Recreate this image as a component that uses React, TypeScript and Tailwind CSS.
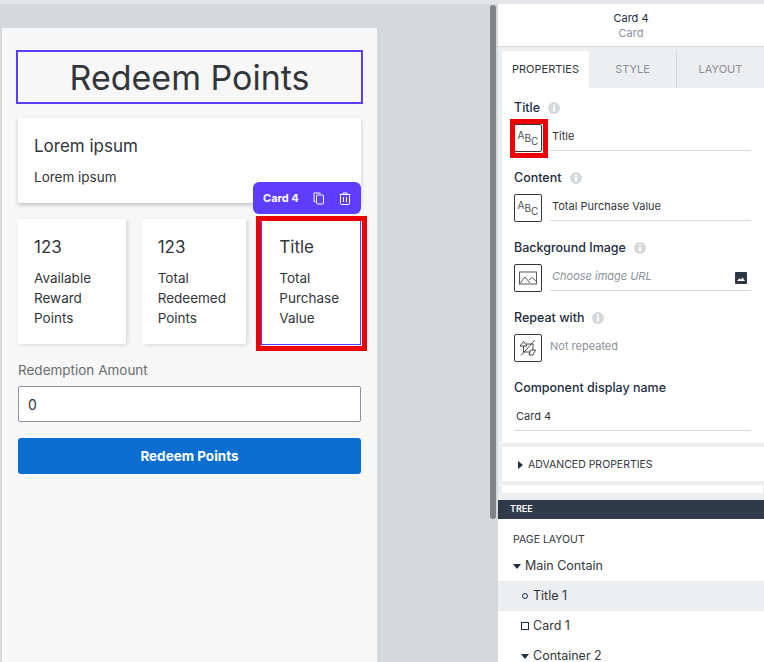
import React from "react";

const font = { fontFamily: 'Inter, sans-serif' };

function Info() {
  return (
    <svg width="12" height="12" viewBox="0 0 12 12" className="shrink-0">
      <circle cx="6" cy="6" r="6" fill="#d5d9dc" />
      <rect x="5" y="5" width="2" height="4.5" fill="#fff" />
      <rect x="5" y="2.5" width="2" height="1.6" fill="#fff" />
    </svg>
  );
}

function Abc() {
  return (
    <div className="w-7 h-7 rounded-[2px] border border-[#32363a] bg-white flex items-start justify-center pt-[5px] text-[#4a4f55] text-[10px] leading-none">
      <span>A</span>
      <span className="mt-[3px]">B</span>
      <span className="mt-[6px]">C</span>
    </div>
  );
}

function Label({ text }: { text: string }) {
  return (
    <div className="flex items-center gap-2 h-5 text-[12.5px] font-medium text-[#1d2d3e]">
      <span>{text}</span>
      <Info />
    </div>
  );
}

function StatCard({ title, lines, w }: { title: string; lines: string[]; w: string }) {
  return (
    <div className={`${w} h-[125px] bg-white shadow-[2px_1px_4px_rgba(0,0,0,0.12)] rounded-[1px] pl-4 pt-4`}>
      <div className="text-[17px] leading-6 text-[#32363a]">{title}</div>
      <div className="mt-[9px] text-[13.5px] leading-5 text-[#32363a]">
        {lines.map((l) => (
          <div key={l}>{l}</div>
        ))}
      </div>
    </div>
  );
}

export default function App() {
  return (
    <div style={font} className="relative w-[764px] h-[662px] overflow-hidden bg-[#d5d9dc] flex flex-col">
      <div className="h-1 shrink-0 bg-[#e4e5e9]" />
      <div className="flex flex-1 min-h-0">
        {/* Canvas side */}
        <div className="relative w-[498px] shrink-0 pt-6 pl-[2px]">
          <div className="relative w-[375px] h-[700px] bg-[#f7f7f7] px-[14px] pt-[22px]">
            <div className="h-[54px] w-[347px] border-2 border-[#5f3dff] flex items-center justify-center text-[34px] text-[#32363a]">
              Redeem Points
            </div>
            <div className="mx-[2px] w-[343px] mt-[14px] h-[85px] bg-white shadow-[0_2px_4px_rgba(0,0,0,0.22)] pl-4 pt-4">
              <div className="text-[17px] leading-6 text-[#32363a]">Lorem ipsum</div>
              <div className="mt-[9px] text-[13.5px] leading-5 text-[#32363a]">Lorem ipsum</div>
            </div>
            <div className="mx-[2px] mt-4 flex w-[343px]">
              <StatCard w="w-[108px]" title="123" lines={["Available", "Reward", "Points"]} />
              <div className="w-4" />
              <StatCard w="w-[105px]" title="123" lines={["Total", "Redeemed", "Points"]} />
              <div className="w-[15px]" />
              <div className="w-[100px] h-[126px] bg-white border-l border-b border-r border-[#5f3dff] pl-[17px] pt-4">
                <div className="text-[17px] leading-6 text-[#32363a]">Title</div>
                <div className="mt-[9px] text-[13.5px] leading-5 text-[#32363a]">
                  <div>Total</div>
                  <div>Purchase</div>
                  <div>Value</div>
                </div>
              </div>
            </div>
            <div className="mx-[2px] mt-[15px] text-[13.5px] leading-5 text-[#6a6d70]">Redemption Amount</div>
            <div className="mx-[2px] mt-[6px] w-[343px] h-9 bg-white border border-[#89919a] rounded-[2px] flex items-center pl-[9px] text-[14px] text-[#32363a]">
              0
            </div>
            <div className="mx-[2px] mt-4 w-[343px] h-9 bg-[#0a6ed1] rounded-[3px] flex items-center justify-center text-white text-[13.5px] font-bold">
              Redeem Points
            </div>
          </div>
          {/* Scrollbar */}
          <div className="absolute left-[490px] top-[1px] w-[6px] h-[514px] rounded-[3px] bg-[#808486]" />
        </div>

        {/* Right panel */}
        <div className="w-[266px] shrink-0 bg-white flex flex-col">
          <div className="h-[43px] shrink-0 border-b border-[#d5d9dc] pt-[2px] flex flex-col items-center justify-center text-[11px] leading-[15px]">
            <div className="text-[#1d2d3e]">Card 4</div>
            <div className="text-[#89919a]">Card</div>
          </div>
          <div className="bg-[#eceef0] pl-1 shrink-0">
            <div className="flex h-[41px] pt-1 bg-[#eceef0] text-[11px]">
              <div className="w-[87px] bg-white rounded-t-[2px] flex items-center justify-center text-[#32363a]">PROPERTIES</div>
              <div className="w-[88px] flex items-center justify-center text-[#89919a] border-r border-[#d5d9dc]">STYLE</div>
              <div className="flex-1 flex items-center justify-center text-[#89919a]">LAYOUT</div>
            </div>
            <div className="bg-white h-[355px] pl-3 pr-3 pt-[10px]">
              <Label text="Title" />
              <div className="flex items-start gap-2 mt-[6px]">
                <Abc />
                <div className="w-[201px] h-[27px] flex items-center border-b border-[#d5d9dc] pl-[2px] pb-[1px] text-[11px] text-[#32363a]">Title</div>
              </div>
              <div className="mt-[16px]"><Label text="Content" /></div>
              <div className="flex items-start gap-2 mt-[6px]">
                <Abc />
                <div className="w-[201px] h-[27px] flex items-center border-b border-[#d5d9dc] pl-[2px] pb-[1px] text-[11px] text-[#32363a]">Total Purchase Value</div>
              </div>
              <div className="mt-[16px]"><Label text="Background Image" /></div>
              <div className="flex items-start gap-2 mt-[6px]">
                <div className="w-7 h-7 rounded-[2px] border border-[#32363a] flex items-center justify-center">
                  <svg width="18" height="14" viewBox="0 0 18 14" fill="none" stroke="#32363a" strokeWidth="0.8">
                    <rect x="0.5" y="1" width="17" height="12" />
                    <path d="M1 12.5 L6 6 L11 12 M10 9 L13 6.5 L17 10" />
                  </svg>
                </div>
                <div className="w-[201px] h-[27px] flex items-center justify-between border-b border-[#d5d9dc] pl-[2px] pr-[4px] pb-[1px] text-[11px] italic text-[#89919a]">
                  <span>Choose image URL</span>
                  <svg width="12" height="12" viewBox="0 0 12 12" className="mt-[2px]">
                    <rect width="12" height="12" rx="1" fill="#2c3746" />
                    <path d="M2 9 L4.5 6.2 L5.8 7.6 L7.5 5.6 L10 9 Z" fill="#fff" />
                  </svg>
                </div>
              </div>
              <div className="mt-[16px]"><Label text="Repeat with" /></div>
              <div className="flex items-center gap-2 mt-[6px]">
                <div className="w-7 h-7 rounded-[2px] border border-[#32363a] flex items-center justify-center">
                  <svg width="18" height="18" viewBox="0 0 18 18" fill="none" stroke="#32363a" strokeWidth="0.9">
                    <path d="M1 7 L4.5 2.5 L8 7 Z M4.5 7 V13 H11" />
                    <path d="M10 16 L14 16 L16.5 11 L11.5 11 Z M7 5 H14 V11" />
                    <path d="M2 16.5 L15.5 1.5" />
                  </svg>
                </div>
                <div className="text-[11px] text-[#89919a] pb-[3px]">Not repeated</div>
              </div>
              <div className="mt-[16px] h-5 flex items-center text-[12.5px] font-medium text-[#1d2d3e]">Component display name</div>
              <div className="mt-[1px] w-[237px] h-[32px] flex items-center border-b border-[#d5d9dc] pl-[2px] pt-[4px] text-[11px] text-[#32363a]">Card 4</div>
            </div>
            <div className="bg-[#eceef0] h-1" />
            <div className="bg-white h-[34px] pl-4 pt-[1px] flex items-center gap-[5px] text-[10.5px] text-[#32363a]">
              <svg width="5" height="8" viewBox="0 0 5 8"><path d="M0 0 L5 4 L0 8 Z" fill="#1d2d3e" /></svg>
              <span>ADVANCED PROPERTIES</span>
            </div>
            <div className="bg-[#eceef0] h-1" />
            <div className="bg-white h-2 mr-[1px]" />
            <div className="h-[7px]" />
          </div>
          <div className="h-[19px] shrink-0 bg-[#2f3a4a] text-white text-[9px] font-semibold pl-3 pb-[1px] flex items-center">TREE</div>
          <div className="flex-1 text-[12.5px] text-[#32363a]">
            <div className="h-[30px] mt-[5px] pl-[15px] pt-[2px] flex items-center text-[10.5px]">PAGE LAYOUT</div>
            <div className="h-[27px] pl-[15px] pb-[2px] flex items-center gap-[4px]">
              <svg width="8" height="5" viewBox="0 0 8 5"><path d="M0 0 H8 L4 5 Z" fill="#1d2d3e" /></svg>
              <span>Main Contain</span>
            </div>
            <div className="h-[30px] bg-[#eceef0] pl-6 flex items-center gap-[5px]">
              <span className="w-[6px] h-[6px] rounded-full border border-[#1d2d3e]" />
              <span>Title 1</span>
            </div>
            <div className="h-[30px] pl-[23px] flex items-center gap-[4px]">
              <span className="w-2 h-2 border border-[#1d2d3e]" />
              <span>Card 1</span>
            </div>
            <div className="h-[30px] pl-[23px] flex items-center gap-[4px]">
              <svg width="8" height="5" viewBox="0 0 8 5"><path d="M0 0 H8 L4 5 Z" fill="#1d2d3e" /></svg>
              <span>Container 2</span>
            </div>
          </div>
        </div>
      </div>

      {/* Overlays */}
      <div className="absolute left-[253px] top-[182px] w-[108px] h-8 rounded-[6px] bg-[#5f3dff] flex items-center pl-[10px] text-white text-[11px] font-bold">
        <span>Card 4</span>
        <svg className="ml-[14px]" width="12" height="13" viewBox="0 0 12 13" fill="none" stroke="#fff" strokeWidth="1">
          <path d="M2.5 9.5 H1 V1 H7.5" />
          <rect x="3.5" y="3" width="7" height="9" rx="1" />
        </svg>
        <svg className="ml-[14px]" width="12" height="13" viewBox="0 0 12 13" fill="none" stroke="#fff" strokeWidth="1">
          <path d="M0.5 2.5 H11.5 M4 2.5 V1 H8 V2.5" />
          <rect x="1.5" y="2.5" width="9" height="10" rx="1" />
          <path d="M4.5 5 V10 M7.5 5 V10" />
        </svg>
      </div>
      <div className="absolute left-[256px] top-[216px] w-[111px] h-[135px] border-[5px] border-[#ec0000]" />
      <div className="absolute left-[510px] top-[119px] w-[38px] h-[39px] border-[5px] border-[#ec0000]" />
    </div>
  );
}
